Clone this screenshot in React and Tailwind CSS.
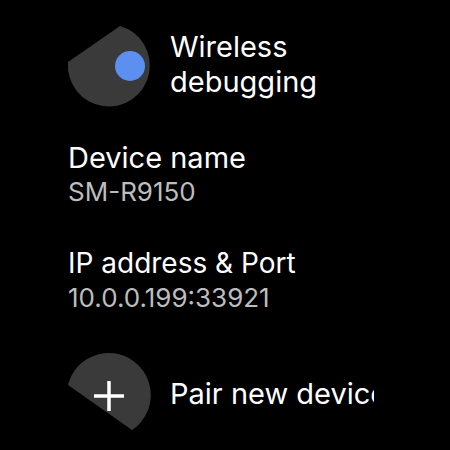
const font = { fontFamily: "Inter, Roboto, 'Noto Sans', sans-serif" };

const ToggleIcon = () => (
    <svg width="96" height="96" viewBox="0 0 96 96" className="shrink-0">
        <path d="M58 7 A41 41 0 1 1 6 43 Z" fill="#3a3a3a" />
        <circle cx="68" cy="47" r="15" fill="#5b8ff0" />
    </svg>
);

const PlusIcon = () => (
    <svg width="96" height="96" viewBox="0 0 96 96" className="shrink-0">
        <path d="M6 39 A42 42 0 1 1 70 84 Z" fill="#3a3a3a" />
        <path d="M47 35 V65 M32 50 H62" stroke="#ffffff" strokeWidth="3.5" />
    </svg>
);

export default function App() {
    return (
        <div className="w-[450px] h-[450px] bg-black overflow-hidden text-white" style={font}>
            <div className="pt-[19px]">

                {/* TOGGLE ROW */}
                <div className="flex items-start h-[96px] pl-[62px] gap-[12px]">
                    <ToggleIcon />
                    <div className="text-[29px] leading-[35px] mt-[10px]">
                        <div>Wireless</div>
                        <div>debugging</div>
                    </div>
                </div>

                {/* DEVICE NAME */}
                <div className="pl-[68px] mt-[26px]">
                    <div className="text-[29px] leading-[34px]">Device name</div>
                    <div className="text-[26px] leading-[30px] mt-[2px] text-[#bdbdbd]">SM-R9150</div>
                </div>

                {/* IP */}
                <div className="pl-[68px] mt-[39px]">
                    <div className="text-[28px] leading-[34px]">IP address &amp; Port</div>
                    <div className="text-[26px] leading-[30px] mt-[3px] text-[#bdbdbd]">10.0.0.199:33921</div>
                </div>

                {/* PAIR ROW */}
                <div className="flex items-center h-[96px] pl-[62px] gap-[12px] mt-[33px]">
                    <PlusIcon />
                    <div className="text-[29px] leading-[38px] w-[204px] overflow-hidden whitespace-nowrap">
                        Pair new device
                    </div>
                </div>
            </div>
        </div>
    );
}
